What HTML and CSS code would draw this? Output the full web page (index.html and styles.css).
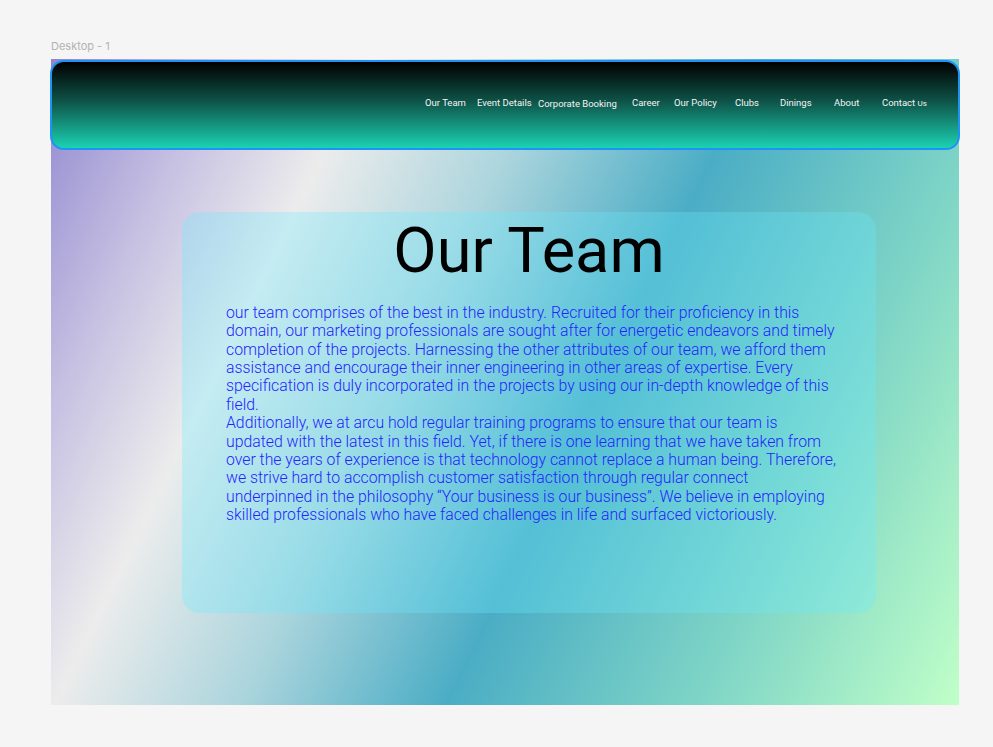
FILE: index.html
```html
<!DOCTYPE html>
<html lang="en">
<head>
<meta charset="utf-8">
<title>Desktop - 1</title>
<link rel="stylesheet" href="styles.css">
</head>
<body>
<div class="canvas">
  <div class="frame-label">Desktop - 1</div>
  <div class="frame">
    <nav class="nav">
      <ul class="nav-list">
        <li class="nav-item">Our Team</li>
        <li class="nav-item">Event Details</li>
        <li class="nav-item nav-item-low">Corporate Booking</li>
        <li class="nav-item">Career</li>
        <li class="nav-item">Our Policy</li>
        <li class="nav-item">Clubs</li>
        <li class="nav-item">Dinings</li>
        <li class="nav-item">About</li>
        <li class="nav-item">Contact <span class="nav-small">Us</span></li>
      </ul>
    </nav>
    <section class="card">
      <h1 class="card-title">Our Team</h1>
      <div class="card-body">
        <p class="card-text">our team comprises of the best in the industry. Recruited for their proficiency in this domain, our marketing professionals are sought after for energetic endeavors and timely completion of the projects. Harnessing the other attributes of our team, we afford them assistance and encourage their inner engineering in other areas of expertise. Every specification is duly incorporated in the projects by using our in-depth knowledge of this field.</p>
        <p class="card-text">Additionally, we at arcu hold regular training programs to ensure that our team is updated with the latest in this field. Yet, if there is one learning that we have taken from over the years of experience is that technology cannot replace a human being. Therefore, we strive hard to accomplish customer satisfaction through regular connect<br>underpinned in the philosophy “Your business is our business”. We believe in employing skilled professionals who have faced challenges in life and surfaced victoriously.</p>
      </div>
    </section>
  </div>
</div>
</body>
</html>
```

FILE: styles.css
```css
* { box-sizing: border-box; }

html, body {
  margin: 0;
  padding: 0;
  background: #f5f5f5;
  font-family: Roboto, "Liberation Sans", sans-serif;
}

.canvas {
  padding: 39px 0 0 51px;
  height: 747px;
  overflow: hidden;
}

.frame-label {
  font-family: Inter, "Liberation Sans", sans-serif;
  font-size: 11px;
  line-height: 14px;
  height: 20px;
  color: #b3b3b3;
}

.frame {
  width: 908px;
  height: 646px;
  background: linear-gradient(116deg,
    #8f87cf 0%,
    #c6c0e2 14%,
    #ececec 26%,
    #acd5dd 41%,
    #4badc5 58%,
    #7fd5c6 79%,
    #c0ffc8 100%);
  padding-top: 1px;
}

.nav {
  margin: 0 -1px;
  height: 90px;
  border: 2px solid #1f93f5;
  border-radius: 14px;
  background: linear-gradient(180deg, #000000 0%, #0e5247 45%, #1bd2b3 100%);
  padding: 35px 0 0 373px;
}

.nav-list {
  list-style: none;
  margin: 0;
  padding: 0;
  display: grid;
  grid-template-columns: 52px 61px 94px 42px 61px 45px 54px 48px auto;
  align-items: start;
}

.nav-item {
  color: #f4f4f4;
  font-size: 9.5px;
  line-height: 12px;
  white-space: nowrap;
}

.nav-item-low {
  padding-top: 1px;
}

.nav-small {
  font-size: 8px;
}

.card {
  margin: 62px 0 0 131px;
  width: 694px;
  height: 401px;
  border-radius: 18px;
  background: rgba(105, 235, 255, 0.3);
  padding: 0 40px 0 44px;
}

.card-title {
  margin: 0 4px 0 0;
  text-align: center;
  font-weight: 400;
  font-size: 63px;
  line-height: 75px;
  color: #000000;
  padding-top: 1px;
}

.card-body {
  margin-top: 16px;
  width: 610px;
}

.card-text {
  margin: 0;
  font-size: 15.8px;
  font-weight: 300;
  line-height: 18.36px;
  color: #2424ff;
}
```
